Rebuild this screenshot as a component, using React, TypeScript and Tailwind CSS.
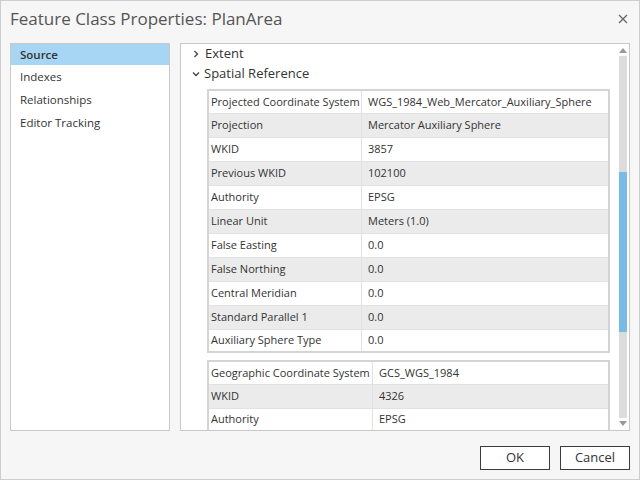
import React from 'react';

type Row = [string, string];

const projected: Row[] = [
  ['Projected Coordinate System', 'WGS_1984_Web_Mercator_Auxiliary_Sphere'],
  ['Projection', 'Mercator Auxiliary Sphere'],
  ['WKID', '3857'],
  ['Previous WKID', '102100'],
  ['Authority', 'EPSG'],
  ['Linear Unit', 'Meters (1.0)'],
  ['False Easting', '0.0'],
  ['False Northing', '0.0'],
  ['Central Meridian', '0.0'],
  ['Standard Parallel 1', '0.0'],
  ['Auxiliary Sphere Type', '0.0'],
];

const geographic: Row[] = [
  ['Geographic Coordinate System', 'GCS_WGS_1984'],
  ['WKID', '4326'],
  ['Authority', 'EPSG'],
];

const PropTable: React.FC<{ rows: Row[]; colWidth: string }> = ({ rows, colWidth }) => (
  <div className="border-2 border-[#d4d4d4] bg-white shrink-0">
    {rows.map(([k, v], i) => (
      <div
        key={k + i}
        className={`flex items-center ${i === 0 || i === rows.length - 1 ? 'h-[22px]' : 'h-[24px]'} ${i > 0 ? 'border-t border-[#e2e2e2]' : ''} ${i % 2 === 1 ? 'bg-[#ebebeb]' : 'bg-white'}`}
      >
        <div className={`${colWidth} h-full flex items-center pl-[2px] border-r border-[#e2e2e2] whitespace-nowrap`}>{k}</div>
        <div className="flex-1 h-full flex items-center pl-[6px] whitespace-nowrap">{v}</div>
      </div>
    ))}
  </div>
);

const Chevron: React.FC<{ open?: boolean }> = ({ open }) => (
  <svg width="8" height="8" viewBox="0 0 8 8" className="shrink-0">
    {open ? (
      <polyline points="1,2.5 4,5.5 7,2.5" fill="none" stroke="#444" strokeWidth="1.3" />
    ) : (
      <polyline points="2.5,1 5.5,4 2.5,7" fill="none" stroke="#444" strokeWidth="1.3" />
    )}
  </svg>
);

export default function App() {
  const navItems = ['Source', 'Indexes', 'Relationships', 'Editor Tracking'];

  return (
    <div
      className="w-[640px] h-[480px] bg-[#f5f6f5] border border-[#cdcdcd] flex flex-col text-[#333] overflow-hidden"
      style={{ fontFamily: '"Open Sans", "Noto Sans", sans-serif' }}
    >
      {/* title bar */}
      <div className="h-[36px] mb-[6px] pl-[9px] pr-[11px] flex items-center justify-between">
        <span className="text-[17px] text-[#555]">Feature Class Properties: PlanArea</span>
        <svg width="10" height="10" viewBox="0 0 10 10">
          <path d="M1 1 L9 9 M9 1 L1 9" stroke="#666" strokeWidth="1.3" />
        </svg>
      </div>

      {/* body */}
      <div className="flex px-[9px] gap-[10px] h-[388px]">
        <div className="w-[160px] border border-[#c9c9c9] bg-white text-[11.5px]">
          {navItems.map((item, i) => (
            <div
              key={item}
              className={`pl-[9px] flex items-center ${i === 0 ? 'h-[21px] bg-[#a7d6f4] font-semibold' : 'h-[23px]'}`}
            >
              {item}
            </div>
          ))}
        </div>

        <div className="flex-1 border border-[#c9c9c9] bg-white flex min-w-0 overflow-hidden">
          <div className="flex-1 overflow-hidden flex flex-col min-w-0">
            <div className="h-[20px] shrink-0 flex items-center gap-[5px] pl-[11px] text-[13px]">
              <Chevron />
              <span>Extent</span>
            </div>
            <div className="h-[20px] shrink-0 flex items-center gap-[4px] pl-[11px] text-[13px]">
              <Chevron open />
              <span>Spatial Reference</span>
            </div>
            <div className="pl-[26px] pr-[9px] mt-[5px] flex flex-col gap-[7px] text-[11px]">
              <PropTable rows={projected} colWidth="w-[153px]" />
              <PropTable rows={geographic} colWidth="w-[164px]" />
            </div>
          </div>

          {/* scrollbar */}
          <div className="w-[8px] mr-[2px] flex flex-col items-center pt-[3px] pb-[3px]">
            <svg width="8" height="6" viewBox="0 0 8 6">
              <polygon points="0,6 4,1 8,6" fill="#9a9a9a" />
            </svg>
            <div className="mt-[3px] w-[8px] flex-1 bg-[#dcdcdc] flex flex-col">
              <div className="h-[116px]" />
              <div className="h-[160px] bg-[#79bae6]" />
            </div>
            <svg width="8" height="6" viewBox="0 0 8 6" className="mt-[3px]">
              <polygon points="0,0 4,5 8,0" fill="#9a9a9a" />
            </svg>
          </div>
        </div>
      </div>

      {/* footer */}
      <div className="flex justify-end gap-[10px] pr-[9px] pt-[15px] text-[13px]">
        <button className="w-[70px] h-[24px] border border-[#3c3c3c] bg-white">OK</button>
        <button className="w-[70px] h-[24px] border border-[#3c3c3c] bg-white">Cancel</button>
      </div>
    </div>
  );
}
